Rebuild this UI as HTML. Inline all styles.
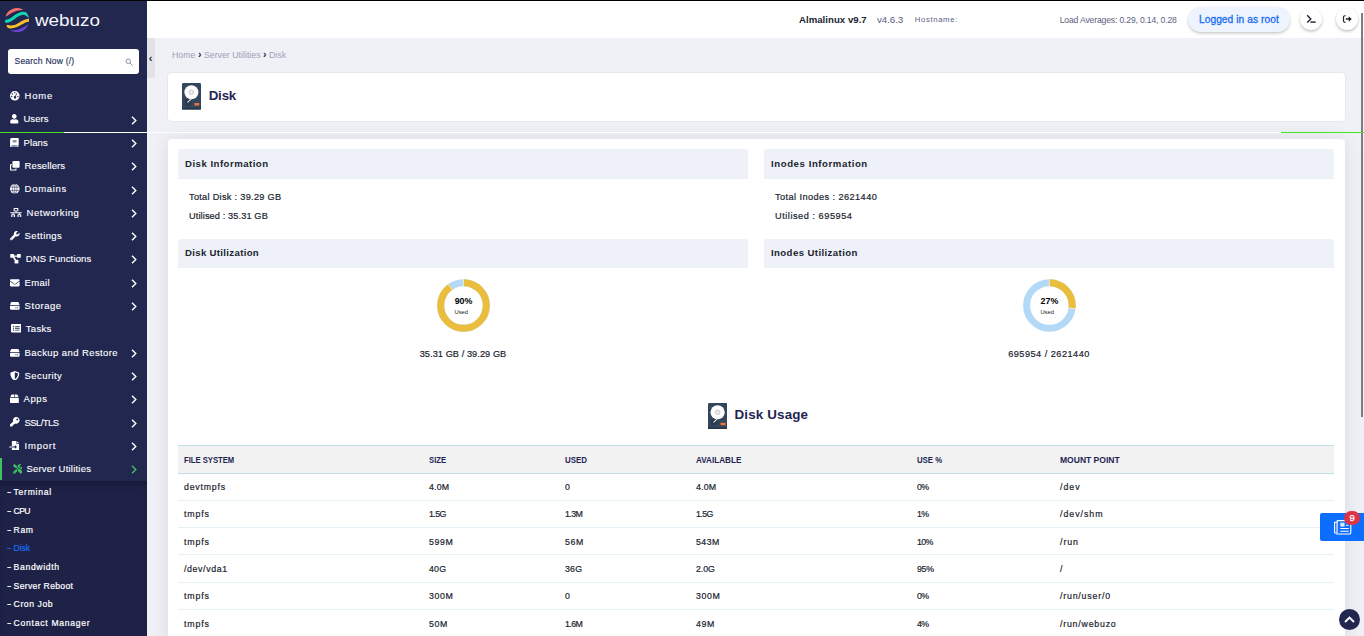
<!DOCTYPE html>
<html lang="en">
<head>
<meta charset="utf-8">
<title>Disk - Webuzo</title>
<style>
*{box-sizing:border-box;margin:0;padding:0}
html,body{width:1364px;height:636px;overflow:hidden;background:#f0f1f6;font-family:"Liberation Sans",sans-serif;color:#1f2552}
body{position:relative}
.abs{position:absolute}
.topline{left:0;top:0;width:1364px;height:1px;background:#000;z-index:50}
/* sidebar */
.sidebar{left:0;top:0;width:147px;height:636px;background:#222750;z-index:10;overflow:hidden}
.logo-text{left:34.600px;top:8.700px;font-size:16.200px;color:#f4f6fb;line-height:22px;transform:scaleX(1.165);transform-origin:0 0}
.search{left:8px;top:49px;width:131px;height:25px;background:#fff;border-radius:3px}
.search span{position:absolute;left:6.500px;top:0;line-height:25px;font-size:8.600px;color:#2a305c;letter-spacing:.18px;-webkit-text-stroke:.15px #2a305c}
.nav{left:0;top:83.900px;width:147px}
.nav .item{position:relative;height:23.320px;width:147px;color:#fff;font-size:9.500px;line-height:23.320px;white-space:nowrap}
.nav .item .lbl{position:absolute;left:24px;top:0;-webkit-text-stroke:.12px #fff}
.nav .item svg.ic{position:absolute;left:10.300px;top:7.200px;width:9.6px;height:9.6px;fill:#fff}
.nav .item svg.chev{position:absolute;left:130.900px;top:8.400px;width:6px;height:9px;fill:none;stroke:#fff;stroke-width:1.400}
.nav .item.active:before{content:"";position:absolute;left:0;top:1px;width:2px;height:22.600px;background:#3fc35f}

.nav .item.active svg.ic{fill:#3fc35f}
.nav .item.active svg.chev{stroke:#3fc35f}
.sub{left:0;top:481px;width:147px;height:155px;background:#1e2247;box-shadow:inset 0 7px 8px -5px rgba(0,0,10,.35)}
.sub .s i{position:absolute;left:-7px;top:0;font-style:normal;letter-spacing:0;display:block;transform:scaleX(1.5);transform-origin:0 50%}
.sub .s{position:absolute;left:13.6px;font-size:8.6px;color:#fff;line-height:12px;white-space:nowrap;-webkit-text-stroke:.2px #fff}
.sub .s.cur{color:#1a6cf0;-webkit-text-stroke:.2px #1a6cf0}
/* header */
.header{left:147px;top:1px;width:1217px;height:37px;background:#fff}
.hline{left:0;top:132px;width:1364px;height:1px;background:#fff;z-index:70}
.hline i{position:absolute;top:0;height:1px;background:#44e424}
.toggle{left:147px;top:38px;width:8px;height:40px;background:#e3e3e5;z-index:11}
.card{background:#fff;border-radius:4px}
.sec{background:#eef1f8;height:29.400px;font-weight:bold;font-size:9.600px;line-height:29px;color:#20242f;padding-left:7px;border-radius:3px 3px 0 0}
.info{font-size:9.200px;color:#20242f;white-space:nowrap;line-height:12px;-webkit-text-stroke:.2px #20242f}

.htxt{white-space:nowrap;line-height:12px}
.pill{left:1187.500px;top:7px;width:102px;height:24.500px;border-radius:13px;background:#eef4fd;box-shadow:0 1.500px 3px rgba(0,0,0,.22)}
.pill span{position:absolute;left:11.400px;top:1.400px;line-height:24.500px;font-size:10.200px;color:#1a6cf0;white-space:nowrap;-webkit-text-stroke:.3px #1a6cf0;letter-spacing:.08px}
.rbtn{width:22px;height:22px;border-radius:50%;background:#fff;box-shadow:0 1.500px 3px rgba(0,0,0,.25)}
.crumb{font-size:8.800px;color:#9da0b6;white-space:nowrap;line-height:12px}
.crumb b{color:#1f2552;font-size:10.500px;line-height:10px}
.ptitle{font-size:13.300px;font-weight:bold;color:#1f2552;line-height:18px;white-space:nowrap;letter-spacing:-.17px}

.dutitle{font-size:13.400px;font-weight:bold;color:#1f2552;line-height:18px;white-space:nowrap;letter-spacing:.15px}
.ctr{text-align:center}
.thead{background:#f2f2f2;border-top:1px solid #bfdde4;border-bottom:1px solid #bfdde4}
.tbl{table-layout:fixed;font-size:8.800px;color:#20242f}
.tbl th{height:27.800px;text-align:left;padding-left:6px;padding-top:2.200px;font-size:8.600px;font-weight:bold;color:#1f2552;white-space:nowrap}
.tbl th span{display:inline-block;transform-origin:0 50%}
.tbl tr.u td{padding-top:.400px}
.tbl td{height:27.330px;padding-left:6px;padding-top:1.600px;border-bottom:1px solid #e6f1f8;white-space:nowrap;-webkit-text-stroke:.2px #20242f}
table{border-collapse:collapse}
</style>
</head>
<body>
<div class="abs topline"></div>

<!-- SIDEBAR -->
<div class="abs sidebar">
  <svg class="abs" style="left:5px;top:7.700px;width:24.200px;height:24.200px" viewBox="0 0 24 24">
    <defs><clipPath id="lc"><circle cx="12" cy="12" r="12"/></clipPath></defs>
    <g clip-path="url(#lc)" fill="none" stroke-linecap="round">
      <path d="M0.500 8.800C4 6.700 7 4.200 12 2.800C14 2.300 16 2 17.600 2L17 -2L-2 -2Z" fill="#f4706f"/>
      <path d="M0.800 13.200C7 13.400 10 6 17.500 5.200C20 5 22 6.200 23.300 7.800" stroke="#12d6b0" stroke-width="3.100"/>
      <path d="M2.500 18.400C8 19.800 12 17.800 16 15C19 13 21 12.200 24 11.800" stroke="#fbbf2d" stroke-width="3"/>
      <path d="M5 21.800C10 23 16 21.400 23.800 15.300L26 26L5 26Z" fill="#6a43d6"/>
    </g>
  </svg>
  <div class="abs logo-text">webuzo</div>
  <div class="abs search"><span>Search Now (/)</span>
    <svg class="abs" style="left:117px;top:9px;width:8px;height:8px" viewBox="0 0 16 16" fill="none" stroke="#8a8fa8" stroke-width="2"><circle cx="6.5" cy="6.5" r="4.5"/><path d="M10 10l5 5"/></svg>
  </div>
  <div class="abs nav">
    <div class="item"><svg class="ic" viewBox="0 0 20 20" style="top:7.200px"><path fill-rule="evenodd" d="M10 0a10 10 0 1 0 0 20a10 10 0 0 0 0-20zM10 2.2a1.500 1.500 0 1 1 0 3a1.500 1.500 0 0 1 0-3zM4.600 4.600a1.500 1.500 0 1 1 0 3a1.500 1.500 0 0 1 0-3zM3.500 9.800a1.500 1.500 0 1 1 0 3a1.500 1.500 0 0 1 0-3zM16.500 9.800a1.500 1.500 0 1 1 0 3a1.500 1.500 0 0 1 0-3zM13.800 4.200l1.300.6l-3 6.400a2.600 2.600 0 1 1-1.400-.6z"/></svg><span class="lbl" style="left:24.6px;letter-spacing:0.79px">Home</span></div>
    <div class="item"><svg class="ic" viewBox="0 0 448 512" style="width:8.6px;height:9.4px"><path d="M224 256c70.700 0 128-57.300 128-128S294.700 0 224 0 96 57.300 96 128s57.300 128 128 128zm89.600 32h-16.700c-22.200 10.200-46.900 16-72.900 16s-50.600-5.800-72.900-16h-16.700C60.200 288 0 348.200 0 422.400V464c0 26.500 21.500 48 48 48h352c26.500 0 48-21.500 48-48v-41.600c0-74.200-60.200-134.400-134.400-134.400z"/></svg><span class="lbl" style="left:23.4px;letter-spacing:0.07px">Users</span><svg class="chev" viewBox="0 0 6 9"><path d="M1 .8L4.800 4.500L1 8.200"/></svg></div>
    <div class="item"><svg class="ic" viewBox="0 0 18 20" style="width:8.800px;top:7.100px"><path fill-rule="evenodd" d="M3.500 0H17a1 1 0 0 1 1 1v13.500a1 1 0 0 1-1 1v2.500a1 1 0 0 1 0 2H3.500A3.500 3.500 0 0 1 0 16.500v-13A3.500 3.500 0 0 1 3.500 0zM3.500 15.700a1 1 0 0 0 0 2H15v-2zM5.500 4.500v1.400h8V4.500zM5.500 7.500v1.400h8V7.500z"/></svg><span class="lbl" style="left:23.4px;letter-spacing:0.16px">Plans</span><svg class="chev" viewBox="0 0 6 9"><path d="M1 .8L4.800 4.500L1 8.200"/></svg></div>
    <div class="item"><svg class="ic" viewBox="0 0 20 20"><path d="M7 0h11a2 2 0 0 1 2 2v10a2 2 0 0 1-2 2H7a2 2 0 0 1-2-2V2a2 2 0 0 1 2-2z"/><path fill-rule="evenodd" d="M3.600 6.500v7a2 2 0 0 0 2 2h8V18a2 2 0 0 1-2 2H2a2 2 0 0 1-2-2V8.500a2 2 0 0 1 2-2zM2.400 8.900v8.700h8.800v-2.100H5.600a2 2 0 0 1-2-2V8.900z"/></svg><span class="lbl" style="left:24.6px;letter-spacing:0.11px">Resellers</span><svg class="chev" viewBox="0 0 6 9"><path d="M1 .8L4.800 4.500L1 8.200"/></svg></div>
    <div class="item"><svg class="ic" viewBox="0 0 20 20"><circle cx="10" cy="10" r="10"/><g fill="none" stroke="#222750" stroke-width="1.100"><path d="M10 .5v19M.8 6.600h18.400M.8 13.400h18.400"/><ellipse cx="10" cy="10" rx="4.600" ry="9.500"/></g></svg><span class="lbl" style="left:24.6px;letter-spacing:0.70px">Domains</span><svg class="chev" viewBox="0 0 6 9"><path d="M1 .8L4.800 4.500L1 8.200"/></svg></div>
    <div class="item"><svg class="ic" viewBox="0 0 24 20" style="width:12px"><path fill-rule="evenodd" d="M8 0h8a1 1 0 0 1 1 1v5a1 1 0 0 1-1 1h-3v2h11v2h-4v2h2a1 1 0 0 1 1 1v5a1 1 0 0 1-1 1h-6a1 1 0 0 1-1-1v-5a1 1 0 0 1 1-1h2v-2H7v2h2a1 1 0 0 1 1 1v5a1 1 0 0 1-1 1H3a1 1 0 0 1-1-1v-5a1 1 0 0 1 1-1h2v-2H0V9h11V7H8a1 1 0 0 1-1-1V1a1 1 0 0 1 1-1zM9.200 2v3h5.600V2zM4.200 15v3h3.600v-3zM17.200 15v3h3.600v-3z"/></svg><span class="lbl" style="left:26.6px;letter-spacing:0.53px;top:.600px">Networking</span><svg class="chev" viewBox="0 0 6 9"><path d="M1 .8L4.800 4.500L1 8.200"/></svg></div>
    <div class="item"><svg class="ic" viewBox="0 0 20 20"><path d="M19.800 4.300a.5.500 0 0 0-.8-.2l-3 3l-2.700-.4l-.4-2.700l3-3a.5.500 0 0 0-.2-.8A5.800 5.800 0 0 0 8.300 7.400L.8 14.900a2.600 2.600 0 0 0 3.700 3.700l7.500-7.500a5.800 5.800 0 0 0 7.800-6.800zM2.700 17.600a.95.950 0 1 1 0-1.900a.95.950 0 0 1 0 1.900z"/></svg><span class="lbl" style="left:24.6px;letter-spacing:0.41px">Settings</span><svg class="chev" viewBox="0 0 6 9"><path d="M1 .8L4.800 4.500L1 8.200"/></svg></div>
    <div class="item"><svg class="ic" viewBox="0 0 24 20" style="width:12px"><path d="M1 0h6a1 1 0 0 1 1 1v2h6V1a1 1 0 0 1 1-1h6a1 1 0 0 1 1 1v6a1 1 0 0 1-1 1h-6a1 1 0 0 1-1-1V5.500H8.600l3.600 6.500H16a1 1 0 0 1 1 1v6a1 1 0 0 1-1 1h-6a1 1 0 0 1-1-1v-6l-3.400-5H1a1 1 0 0 1-1-1V1a1 1 0 0 1 1-1z"/></svg><span class="lbl" style="left:25.7px;letter-spacing:0.14px">DNS Functions</span><svg class="chev" viewBox="0 0 6 9"><path d="M1 .8L4.800 4.500L1 8.200"/></svg></div>
    <div class="item"><svg class="ic" viewBox="0 0 512 512"><path d="M502.300 190.800c3.900-3.100 9.700-.2 9.700 4.700V400c0 26.500-21.500 48-48 48H48c-26.500 0-48-21.500-48-48V195.600c0-5 5.700-7.800 9.700-4.700 22.400 17.400 52.100 39.500 154.100 113.600 21.100 15.400 56.700 47.800 92.200 47.600 35.700.3 72-32.800 92.300-47.600 102-74.100 131.600-96.300 154-113.700zM256 320c23.200.4 56.600-29.200 73.400-41.400 132.700-96.300 142.800-104.700 173.400-128.700 5.800-4.500 9.200-11.500 9.200-18.900v-19c0-26.500-21.500-48-48-48H48C21.500 64 0 85.500 0 112v19c0 7.400 3.400 14.300 9.200 18.900 30.600 23.900 40.700 32.400 173.400 128.700 16.800 12.200 50.200 41.800 73.400 41.400z"/></svg><span class="lbl" style="left:24.6px;letter-spacing:0.33px;top:.600px">Email</span><svg class="chev" viewBox="0 0 6 9"><path d="M1 .8L4.800 4.500L1 8.200"/></svg></div>
    <div class="item"><svg class="ic" viewBox="0 0 20 20"><path fill-rule="evenodd" d="M3.300 2h13.400a1.600 1.600 0 0 1 1.400.9L20 8.500H0l1.900-5.600A1.600 1.600 0 0 1 3.300 2zM1.600 10h16.800a1.600 1.600 0 0 1 1.600 1.600v4.800a1.600 1.600 0 0 1-1.600 1.600H1.600A1.600 1.600 0 0 1 0 16.400v-4.800A1.600 1.600 0 0 1 1.600 10zM16 12.800a1.200 1.200 0 1 0 0 2.400a1.200 1.200 0 0 0 0-2.400zM12.400 12.800a1.200 1.200 0 1 0 0 2.400a1.200 1.200 0 0 0 0-2.400z"/></svg><span class="lbl" style="left:24.6px;letter-spacing:0.54px">Storage</span><svg class="chev" viewBox="0 0 6 9"><path d="M1 .8L4.800 4.500L1 8.200"/></svg></div>
    <div class="item"><svg class="ic" viewBox="0 0 22 17" style="left:10.700px;width:10.600px;height:8.600px;top:7.300px" preserveAspectRatio="none"><path fill-rule="evenodd" d="M2 0h18a2 2 0 0 1 2 2v13a2 2 0 0 1-2 2H2a2 2 0 0 1-2-2V2a2 2 0 0 1 2-2zM4 3.600v2h2.400v-2zM8.500 3.800v1.600H18V3.800zM4 7.400v2h2.400v-2zM8.500 7.600v1.600H18V7.600zM4 11.200v2h2.400v-2zM8.500 11.400v1.600H18v-1.600z"/></svg><span class="lbl" style="left:25.7px;letter-spacing:0.35px">Tasks</span></div>
    <div class="item"><svg class="ic" viewBox="0 0 20 20"><path fill-rule="evenodd" d="M3.300 2h13.400a1.600 1.600 0 0 1 1.400.9L20 8.500H0l1.900-5.600A1.600 1.600 0 0 1 3.300 2zM1.600 10h16.800a1.600 1.600 0 0 1 1.600 1.600v4.800a1.600 1.600 0 0 1-1.600 1.600H1.600A1.600 1.600 0 0 1 0 16.400v-4.800A1.600 1.600 0 0 1 1.600 10zM16 12.800a1.200 1.200 0 1 0 0 2.400a1.200 1.200 0 0 0 0-2.400zM12.400 12.800a1.200 1.200 0 1 0 0 2.400a1.200 1.200 0 0 0 0-2.400z"/></svg><span class="lbl" style="left:24.6px;letter-spacing:0.41px;top:.600px">Backup and Restore</span><svg class="chev" viewBox="0 0 6 9"><path d="M1 .8L4.800 4.500L1 8.200"/></svg></div>
    <div class="item"><svg class="ic" viewBox="0 0 20 20"><path fill-rule="evenodd" d="M10 0l8.300 3.300c.6.200 1 .8 1 1.500C19.300 13 14.500 18 10.700 19.800a1.600 1.600 0 0 1-1.400 0C5.500 18 .7 13 .7 4.800c0-.7.400-1.300 1-1.500zM10 2.700v14.500c3-1.700 6.400-5.600 6.700-11.800z"/></svg><span class="lbl" style="left:24.6px;letter-spacing:0.41px">Security</span><svg class="chev" viewBox="0 0 6 9"><path d="M1 .8L4.800 4.500L1 8.200"/></svg></div>
    <div class="item"><svg class="ic" viewBox="0 0 20 20" style="width:8.800px" preserveAspectRatio="none"><path d="M3.200 1.600L.3 6.800h9V1H4.200a1.200 1.200 0 0 0-1 .6zM10.700 1v5.800h9l-2.900-5.200a1.200 1.200 0 0 0-1-.6zM0 8.200h20v9a1.800 1.800 0 0 1-1.800 1.800H1.800A1.800 1.800 0 0 1 0 17.200z"/></svg><span class="lbl" style="left:23.4px;letter-spacing:0.65px">Apps</span><svg class="chev" viewBox="0 0 6 9"><path d="M1 .8L4.800 4.500L1 8.200"/></svg></div>
    <div class="item"><svg class="ic" viewBox="0 0 20 20"><path fill-rule="evenodd" d="M13.100 0a6.900 6.900 0 1 1-2 13.500L9.700 15H7.500v2.200H5.300V20H1a1 1 0 0 1-1-1v-3.200L6.500 9.300A6.900 6.900 0 0 1 13.100 0zM15 3.100a1.900 1.900 0 1 0 0 3.800a1.900 1.900 0 0 0 0-3.800z"/></svg><span class="lbl" style="left:24.6px;letter-spacing:-0.60px;top:.600px">SSL/TLS</span><svg class="chev" viewBox="0 0 6 9"><path d="M1 .8L4.800 4.500L1 8.200"/></svg></div>
    <div class="item"><svg class="ic" viewBox="0 0 22 20" style="width:11px;left:9.400px"><path fill-rule="evenodd" d="M7 0h8v5.500h5.500V18.500A1.500 1.500 0 0 1 19 20H7a1.500 1.500 0 0 1-1.500-1.500V13.600h6.200v2.700l4.600-3.900l-4.600-3.900v2.900H5.500V1.500A1.500 1.500 0 0 1 7 0zM16.400 0.300L20.200 4.100H16.400zM0 11.400h5.500v2.200H0z"/></svg><span class="lbl" style="left:24.6px;letter-spacing:0.79px">Import</span><svg class="chev" viewBox="0 0 6 9"><path d="M1 .8L4.800 4.500L1 8.200"/></svg></div>
    <div class="item active"><svg class="ic" viewBox="0 0 20 20" style="left:12.600px;width:9.600px;height:9.600px"><path d="M19.600 15.500l-4.600-4.600a2.500 2.500 0 0 0-2.900-.5L8 6.300V3.800L3 0 0 3l3.800 5h2.500l4.100 4.100a2.500 2.500 0 0 0 .5 2.900l4.600 4.600a1.250 1.250 0 0 0 1.800 0l2.300-2.300a1.250 1.250 0 0 0 0-1.800zM13.300 8.900c1.100 0 2.100.4 2.900 1.200l.8.800a4.700 4.700 0 0 0 2-1.300a5.600 5.600 0 0 0 1.500-5.300a.47.470 0 0 0-.8-.2l-2.900 2.900l-2.600-.4l-.4-2.600l2.900-2.900a.47.470 0 0 0-.2-.8a5.600 5.600 0 0 0-5.300 1.500A5.500 5.500 0 0 0 9.600 6l4 3zM8.800 12.300L6.800 10.300L.7 16.300a2.500 2.500 0 0 0 3.500 3.500l5-5a3.900 3.900 0 0 1-.4-2.500zM2.500 18.400a.94.940 0 1 1 0-1.900a.94.940 0 0 1 0 1.900z"/></svg><span class="lbl" style="left:26.4px;letter-spacing:0.22px">Server Utilities</span><svg class="chev" viewBox="0 0 6 9"><path d="M1 .8L4.800 4.500L1 8.200"/></svg></div>
  </div>
  <div class="abs sub">
    <div class="s" style="top:4.5px;letter-spacing:0.72px"><i>-</i> Terminal</div>
    <div class="s" style="top:23.8px;letter-spacing:-0.60px"><i>-</i> CPU</div>
    <div class="s" style="top:42.6px;letter-spacing:0.62px"><i>-</i> Ram</div>
    <div class="s cur" style="top:60.8px;letter-spacing:-0.11px"><i>-</i> Disk</div>
    <div class="s" style="top:79.6px;letter-spacing:0.67px"><i>-</i> Bandwidth</div>
    <div class="s" style="top:98.9px;letter-spacing:0.33px"><i>-</i> Server Reboot</div>
    <div class="s" style="top:117.0px;letter-spacing:0.59px"><i>-</i> Cron Job</div>
    <div class="s" style="top:135.7px;letter-spacing:0.73px"><i>-</i> Contact Manager</div>
  </div>
</div>

<!-- HEADER -->
<div class="abs header"></div>
<div class="abs hline"><i style="left:0;width:64px"></i><i style="left:1281px;width:83px"></i></div>
<div class="abs toggle"></div>

<!-- CONTENT -->
<div class="abs card" style="left:168px;top:73px;width:1177px;height:48px;box-shadow:0 0 0 1px rgba(222,224,230,.55)"></div>
<div class="abs card" style="left:168px;top:139px;width:1177px;height:520px;box-shadow:0 0 18px rgba(30,35,80,.10)"></div>

<!-- header contents -->
<div class="abs htxt" style="left:799px;top:14.400px;font-size:9.600px;font-weight:bold;color:#20242f;letter-spacing:.04px">Almalinux v9.7</div>
<div class="abs htxt" style="left:877px;top:14.400px;font-size:9.800px;color:#5b6080;letter-spacing:-.08px">v4.6.3</div>
<div class="abs htxt" style="left:914.700px;top:14px;font-size:7.800px;color:#5b6080;letter-spacing:.62px">Hostname:</div>
<div class="abs htxt" style="left:1059.700px;top:13.700px;font-size:8.600px;color:#5b6080;letter-spacing:-.15px">Load Averages: 0.29, 0.14, 0.28</div>
<div class="abs pill"><span>Logged in as root</span></div>
<div class="abs rbtn" style="left:1299.500px;top:8.300px">
  <svg viewBox="0 0 22 22" width="22" height="22"><path d="M7.200 7.300L10.800 10.900L7.200 14.500" fill="none" stroke="#20242f" stroke-width="1.350"/><rect x="10.400" y="13.300" width="5.300" height="1.600" fill="#3a3d48"/></svg>
</div>
<div class="abs rbtn" style="left:1336.300px;top:7.900px">
  <svg viewBox="0 0 22 22" width="22" height="22"><path d="M9.700 7.750H8.900a1.400 1.400 0 0 0-1.400 1.400v3.700a1.400 1.400 0 0 0 1.400 1.400h.8" fill="none" stroke="#20242f" stroke-width="1.200"/><path d="M9.800 10.200h2.900V8.300l3.100 2.700l-3.100 2.700v-1.900H9.800z" fill="#20242f"/></svg>
</div>

<!-- breadcrumb -->
<div class="abs crumb" style="left:172px;top:49px"><span>Home</span> <b>&rsaquo;</b> <span>Server Utilities</span> <b>&rsaquo;</b> <span>Disk</span></div>
<div class="abs" style="left:148.800px;top:52.400px;font-size:11px;font-weight:bold;color:#1f2552;line-height:12px;z-index:12">&lsaquo;</div>

<!-- page title -->
<div class="abs ptitle" style="left:208.700px;top:86.900px">Disk</div>


<svg class="abs" style="left:182px;top:83px;width:19px;height:26.600px" viewBox="0 0 19 26.600" preserveAspectRatio="none">
  <rect x="0" y="0" width="19" height="26.600" rx="1.200" fill="#34465b"/>
      <rect x="0" y="24.800" width="19" height="1.800" rx=".9" fill="#26354a"/>
      <rect x="3" y="16" width="6.500" height="6.500" fill="#2b3a4e"/>
      <circle cx="9.400" cy="9.300" r="7" fill="#fdfdfd"/>
      <circle cx="9.400" cy="9.300" r="2.300" fill="#e6e6e6" stroke="#c8c8c8" stroke-width=".8"/>
      <circle cx="9.400" cy="9.300" r=".6" fill="#fff"/>
      <path d="M9.200 15.800L5.800 19.200" stroke="#e8e8e8" stroke-width="1.100" stroke-linecap="round"/>
      <rect x="12.400" y="20" width="4.800" height="2.500" rx=".4" fill="#f2703a"/>
</svg>
<svg class="abs" style="left:707.700px;top:402.600px;width:19.400px;height:26.400px" viewBox="0 0 19 26.600" preserveAspectRatio="none">
  <rect x="0" y="0" width="19" height="26.600" rx="1.200" fill="#34465b"/>
      <rect x="0" y="24.800" width="19" height="1.800" rx=".9" fill="#26354a"/>
      <rect x="3" y="16" width="6.500" height="6.500" fill="#2b3a4e"/>
      <circle cx="9.400" cy="9.300" r="7" fill="#fdfdfd"/>
      <circle cx="9.400" cy="9.300" r="2.300" fill="#e6e6e6" stroke="#c8c8c8" stroke-width=".8"/>
      <circle cx="9.400" cy="9.300" r=".6" fill="#fff"/>
      <path d="M9.200 15.800L5.800 19.200" stroke="#e8e8e8" stroke-width="1.100" stroke-linecap="round"/>
      <rect x="12.400" y="20" width="4.800" height="2.500" rx=".4" fill="#f2703a"/>
</svg>
<div class="abs dutitle" style="left:734.500px;top:406.400px">Disk Usage</div>

<!-- sections -->
<div class="abs sec" style="left:178px;top:149px;width:570px;height:29.600px;line-height:30px;letter-spacing:0.49px">Disk Information</div>
<div class="abs sec" style="left:764px;top:149px;width:570px;height:29.600px;line-height:30px;letter-spacing:0.58px">Inodes Information</div>
<div class="abs info" style="left:189px;top:190.500px;letter-spacing:0.29px">Total Disk : 39.29 GB</div>
<div class="abs info" style="left:189px;top:209.500px;letter-spacing:0.12px">Utilised : 35.31 GB</div>
<div class="abs info" style="left:775px;top:190.500px;letter-spacing:0.42px">Total Inodes : 2621440</div>
<div class="abs info" style="left:775px;top:209.500px;letter-spacing:0.53px">Utilised : 695954</div>
<div class="abs sec" style="left:178px;top:239px;width:570px;line-height:27.200px;letter-spacing:0.33px">Disk Utilization</div>
<div class="abs sec" style="left:764px;top:239px;width:570px;line-height:27.200px;letter-spacing:0.41px">Inodes Utilization</div>

<!-- donuts -->
<svg class="abs" style="left:433px;top:275px;width:60px;height:60px" viewBox="-30.500 -30.500 60 60">
  <circle r="22.800" fill="none" stroke="#b3d9f7" stroke-width="7"/>
  <circle r="22.800" fill="none" stroke="#ebbd3c" stroke-width="7" stroke-dasharray="128.930 143.260" transform="rotate(-90)"/>
  <path d="M0 -19V-27" stroke="#fff" stroke-width=".600"/><path d="M0 -19V-27" stroke="#fff" stroke-width=".600" transform="rotate(-36)"/>
  <text x="0" y="-1.400" text-anchor="middle" font-family="Liberation Sans, sans-serif" font-weight="bold" font-size="8.900" fill="#000">90%</text>
  <text x="-2.200" y="8.700" text-anchor="middle" font-family="Liberation Sans, sans-serif" font-size="5.800" fill="#222">Used</text>
</svg>
<svg class="abs" style="left:1019px;top:275px;width:60px;height:60px" viewBox="-30.400 -30.500 60 60">
  <circle r="22.800" fill="none" stroke="#b3d9f7" stroke-width="7"/>
  <circle r="22.800" fill="none" stroke="#ebbd3c" stroke-width="7" stroke-dasharray="38.680 143.260" transform="rotate(-90)"/>
  <path d="M0 -19V-27" stroke="#fff" stroke-width=".600"/><path d="M0 -19V-27" stroke="#fff" stroke-width=".600" transform="rotate(97.200)"/>
  <text x="0" y="-1.400" text-anchor="middle" font-family="Liberation Sans, sans-serif" font-weight="bold" font-size="8.900" fill="#000">27%</text>
  <text x="-2.200" y="8.700" text-anchor="middle" font-family="Liberation Sans, sans-serif" font-size="5.800" fill="#222">Used</text>
</svg>
<div class="abs info ctr" style="left:363px;top:347.500px;width:200px;letter-spacing:0.07px">35.31 GB / 39.29 GB</div>
<div class="abs info ctr" style="left:949px;top:347.500px;width:200px;letter-spacing:0.47px">695954 / 2621440</div>

<!-- table -->
<div class="abs thead" style="left:178px;top:445px;width:1156px;height:29px"></div>
<table class="abs tbl" style="left:178px;top:445px;width:1156px">
 <colgroup><col style="width:245px"><col style="width:136px"><col style="width:131px"><col style="width:221px"><col style="width:143px"><col style="width:280px"></colgroup>
 <thead><tr><th><span style="transform:scaleX(0.891)">FILE SYSTEM</span></th><th><span style="transform:scaleX(0.895)">SIZE</span></th><th><span style="transform:scaleX(0.921)">USED</span></th><th><span style="transform:scaleX(0.946)">AVAILABLE</span></th><th><span style="transform:scaleX(0.906)">USE %</span></th><th><span style="transform:scaleX(0.992)">MOUNT POINT</span></th></tr></thead>
 <tbody>
  <tr><td style="letter-spacing:0.77px">devtmpfs</td><td style="letter-spacing:0.21px">4.0M</td><td>0</td><td style="letter-spacing:0.21px">4.0M</td><td style="letter-spacing:-0.60px">0%</td><td style="letter-spacing:1.00px">/dev</td></tr>
  <tr class="u"><td style="letter-spacing:0.87px">tmpfs</td><td style="letter-spacing:-0.60px">1.5G</td><td style="letter-spacing:-0.60px">1.3M</td><td style="letter-spacing:-0.60px">1.5G</td><td style="letter-spacing:-0.60px">1%</td><td style="letter-spacing:0.98px">/dev/shm</td></tr>
  <tr><td style="letter-spacing:0.87px">tmpfs</td><td style="letter-spacing:0.59px">599M</td><td style="letter-spacing:0.64px">56M</td><td style="letter-spacing:0.46px">543M</td><td style="letter-spacing:-0.60px">10%</td><td style="letter-spacing:0.94px">/run</td></tr>
  <tr><td style="letter-spacing:0.62px">/dev/vda1</td><td style="letter-spacing:0.23px">40G</td><td style="letter-spacing:0.23px">36G</td><td style="letter-spacing:-0.06px">2.0G</td><td style="letter-spacing:-0.30px">95%</td><td>/</td></tr>
  <tr class="u"><td style="letter-spacing:0.87px">tmpfs</td><td style="letter-spacing:0.59px">300M</td><td>0</td><td style="letter-spacing:0.59px">300M</td><td style="letter-spacing:-0.60px">0%</td><td style="letter-spacing:0.80px">/run/user/0</td></tr>
  <tr><td style="letter-spacing:0.87px">tmpfs</td><td style="letter-spacing:0.64px">50M</td><td style="letter-spacing:-0.60px">1.6M</td><td style="letter-spacing:0.64px">49M</td><td style="letter-spacing:-0.60px">4%</td><td style="letter-spacing:0.78px">/run/webuzo</td></tr>
 </tbody>
</table>

<!-- floating buttons -->
<div class="abs" style="left:1320px;top:513px;width:44px;height:27.600px;background:#0d6efd;border-radius:2px 0 0 2px;z-index:30">
  <svg class="abs" style="left:14.300px;top:7.200px;width:17.400px;height:14.600px" viewBox="0 0 17.400 14.600" fill="none" stroke="#fff" stroke-width="1.150"><path d="M3.100 .6h13.700v11.900a1.500 1.500 0 0 1-1.500 1.500H2.200"/><path d="M3.100 .6v11.700a1.300 1.300 0 0 1-2.500 0V2.300h2.500"/><rect x="6.300" y="2.700" width="4.300" height="3.900" fill="#dbe9ff" stroke="none"/><path d="M12 5.300h2.600M6.300 8.600h8.400M6.300 11.200h8.400" stroke-width="1.050"/></svg>
  <div class="abs" style="left:24.100px;top:-2.100px;width:15.900px;height:13.800px;border-radius:7px;background:#dc3545;color:#fff;font-size:9.400px;line-height:13.600px;text-align:center;-webkit-text-stroke:.25px #fff">9</div>
</div>
<div class="abs" style="left:1338.500px;top:609px;width:21px;height:21px;border-radius:50%;background:#222750;z-index:30">
  <svg class="abs" style="left:5px;top:6.500px;width:11px;height:7px" viewBox="0 0 11 7" fill="none" stroke="#fff" stroke-width="1.900"><path d="M1 6L5.500 1.500L10 6"/></svg>
</div>
<div class="abs" style="left:1361px;top:13px;width:2px;height:404px;background:#7d7d7d;z-index:60"></div>

</body>
</html>
